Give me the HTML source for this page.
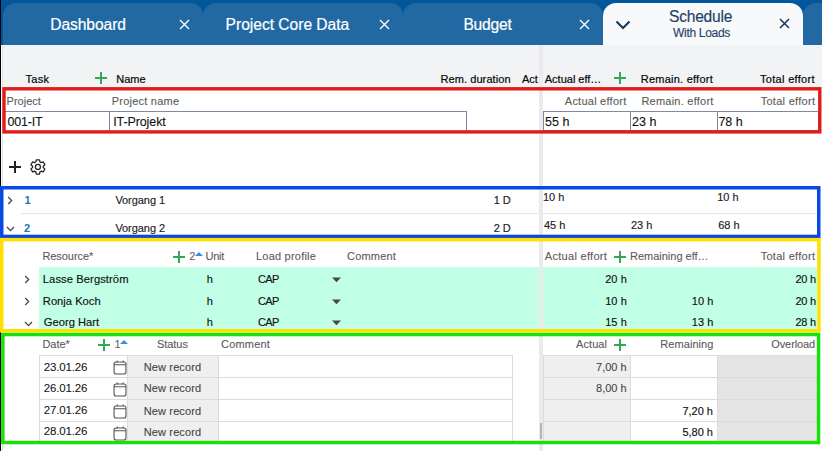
<!DOCTYPE html>
<html><head><meta charset="utf-8"><style>
html,body{margin:0;padding:0;width:822px;height:451px;overflow:hidden;background:#fff}
body{position:relative;font-family:"Liberation Sans",sans-serif}
body div,body span,body svg{position:absolute;display:block}
span{white-space:nowrap}

</style></head><body>
<div style="left:0px;top:0px;width:822px;height:45px;background:#02569a"></div>
<div style="left:3px;top:3px;width:200px;height:42px;background:#2269a4;border-radius:13px 13px 0 0"></div>
<div style="left:203px;top:3px;width:200px;height:42px;background:#2269a4;border-radius:13px 13px 0 0"></div>
<div style="left:403px;top:3px;width:200px;height:42px;background:#2269a4;border-radius:13px 13px 0 0"></div>
<div style="left:603px;top:3px;width:200px;height:42px;background:#f8f9fb;border-radius:13px 13px 0 0"></div>
<div style="left:803px;top:3px;width:200px;height:42px;background:#2269a4;border-radius:13px 13px 0 0"></div>
<span style="left:50.20px;top:17.09px;font-size:15.6px;line-height:15.6px;color:#ffffff;font-weight:normal;-webkit-text-stroke:0.2px #ffffff;letter-spacing:-0.062px;">Dashboard</span>
<span style="left:225.60px;top:17.09px;font-size:15.6px;line-height:15.6px;color:#ffffff;font-weight:normal;-webkit-text-stroke:0.2px #ffffff;letter-spacing:-0.019px;">Project Core Data</span>
<span style="left:463.40px;top:17.09px;font-size:15.6px;line-height:15.6px;color:#ffffff;font-weight:normal;-webkit-text-stroke:0.2px #ffffff;letter-spacing:-0.220px;">Budget</span>
<svg style="left:178.5px;top:19.0px" width="11" height="11" viewBox="0 0 11 11"><path d="M1 1L10 10M10 1L1 10" stroke="#ffffff" stroke-width="1.4" fill="none"/></svg>
<svg style="left:378.5px;top:19.0px" width="11" height="11" viewBox="0 0 11 11"><path d="M1 1L10 10M10 1L1 10" stroke="#ffffff" stroke-width="1.4" fill="none"/></svg>
<svg style="left:578.5px;top:19.0px" width="11" height="11" viewBox="0 0 11 11"><path d="M1 1L10 10M10 1L1 10" stroke="#ffffff" stroke-width="1.4" fill="none"/></svg>
<svg style="left:778.5px;top:18.4px" width="11" height="11" viewBox="0 0 11 11"><path d="M1 1L10 10M10 1L1 10" stroke="#173a5e" stroke-width="1.6" fill="none"/></svg>
<svg style="left:615px;top:20px" width="16" height="10" viewBox="0 0 16 10"><path d="M1.5 1.5L8 8L14.5 1.5" stroke="#1b3b5a" stroke-width="2.2" fill="none"/></svg>
<span style="left:669.00px;top:8.59px;font-size:15.6px;line-height:15.6px;color:#1d4266;font-weight:normal;-webkit-text-stroke:0.15px #1d4266;letter-spacing:-0.243px;">Schedule</span>
<span style="left:673.00px;top:27.14px;font-size:12px;line-height:12px;color:#1d4266;font-weight:normal;-webkit-text-stroke:0.12px #1d4266;letter-spacing:-0.300px;">With Loads</span>
<div style="left:0px;top:45px;width:822px;height:406px;background:#ffffff"></div>
<div style="left:0px;top:45px;width:822px;height:43px;background:#f2f3f5"></div>
<div style="left:0px;top:0px;width:1px;height:451px;background:#000"></div>
<div style="left:1px;top:45px;width:1px;height:406px;background:#ffffff"></div>
<div style="left:2px;top:45px;width:1px;height:406px;background:#dde1e6"></div>
<span style="left:25.40px;top:74.39px;font-size:11px;line-height:11px;color:#080808;font-weight:normal;-webkit-text-stroke:0.2px #080808;letter-spacing:0.367px;">Task</span>
<div style="left:95.4px;top:76.8px;width:12px;height:2px;background:#34a853"></div>
<div style="left:100.4px;top:71.8px;width:2px;height:12px;background:#34a853"></div>
<span style="left:116.20px;top:74.39px;font-size:11px;line-height:11px;color:#080808;font-weight:normal;-webkit-text-stroke:0.2px #080808;">Name</span>
<span style="right:311.31px;top:74.39px;font-size:11px;line-height:11px;color:#080808;font-weight:normal;-webkit-text-stroke:0.2px #080808;letter-spacing:0.092px;">Rem. duration</span>
<div style="left:522px;top:70px;width:17px;height:16px;overflow:hidden"><span style="left:0;top:4.39px;font-size:11px;line-height:11px;color:#080808;-webkit-text-stroke:0.2px #080808">Act</span></div>
<span style="left:544.80px;top:74.39px;font-size:11px;line-height:11px;color:#080808;font-weight:normal;-webkit-text-stroke:0.2px #080808;letter-spacing:-0.010px;">Actual eff…</span>
<div style="left:613.5px;top:77.0px;width:12px;height:2px;background:#34a853"></div>
<div style="left:618.5px;top:72.0px;width:2px;height:12px;background:#34a853"></div>
<span style="left:640.80px;top:74.39px;font-size:11px;line-height:11px;color:#080808;font-weight:normal;-webkit-text-stroke:0.2px #080808;letter-spacing:0.231px;">Remain. effort</span>
<span style="right:7.08px;top:74.39px;font-size:11px;line-height:11px;color:#080808;font-weight:normal;-webkit-text-stroke:0.2px #080808;letter-spacing:0.318px;">Total effort</span>
<span style="left:6.60px;top:95.69px;font-size:11px;line-height:11px;color:#5a5a5a;font-weight:normal;-webkit-text-stroke:0.1px #5a5a5a;">Project</span>
<span style="left:111.80px;top:95.69px;font-size:11px;line-height:11px;color:#5a5a5a;font-weight:normal;-webkit-text-stroke:0.1px #5a5a5a;letter-spacing:0.218px;">Project name</span>
<span style="right:195.56px;top:95.69px;font-size:11px;line-height:11px;color:#5a5a5a;font-weight:normal;-webkit-text-stroke:0.1px #5a5a5a;letter-spacing:0.242px;">Actual effort</span>
<span style="left:641.40px;top:95.69px;font-size:11px;line-height:11px;color:#5a5a5a;font-weight:normal;-webkit-text-stroke:0.1px #5a5a5a;letter-spacing:0.238px;">Remain. effort</span>
<span style="right:6.71px;top:95.69px;font-size:11px;line-height:11px;color:#5a5a5a;font-weight:normal;-webkit-text-stroke:0.1px #5a5a5a;letter-spacing:0.291px;">Total effort</span>
<div style="left:3px;top:111px;width:464px;height:20px;border-top:1px solid #7c8ba1;border-right:1px solid #7c8ba1;box-sizing:border-box"></div>
<div style="left:109px;top:111px;width:1px;height:20px;background:#7c8ba1"></div>
<div style="left:543px;top:111px;width:276px;height:20px;border:1px solid #7c8ba1;box-sizing:border-box"></div>
<div style="left:630px;top:111px;width:1px;height:20px;background:#7c8ba1"></div>
<div style="left:717px;top:111px;width:1px;height:20px;background:#7c8ba1"></div>
<span style="left:7.60px;top:116.32px;font-size:12.5px;line-height:12.5px;color:#111;font-weight:normal;-webkit-text-stroke:0.1px #111;letter-spacing:-0.200px;">001-IT</span>
<span style="left:113.20px;top:116.32px;font-size:12.5px;line-height:12.5px;color:#111;font-weight:normal;-webkit-text-stroke:0.1px #111;letter-spacing:-0.100px;">IT-Projekt</span>
<span style="left:545.00px;top:116.32px;font-size:12.5px;line-height:12.5px;color:#111;font-weight:normal;-webkit-text-stroke:0.1px #111;">55 h</span>
<span style="left:632.00px;top:116.32px;font-size:12.5px;line-height:12.5px;color:#111;font-weight:normal;-webkit-text-stroke:0.1px #111;">23 h</span>
<span style="left:718.40px;top:116.32px;font-size:12.5px;line-height:12.5px;color:#111;font-weight:normal;-webkit-text-stroke:0.1px #111;">78 h</span>
<div style="left:9px;top:166px;width:12px;height:2px;background:#222"></div>
<div style="left:14px;top:161px;width:2px;height:12px;background:#222"></div>
<svg style="left:28.7px;top:158.1px" width="17.8" height="17.8" viewBox="0 0 24 24"><path fill="none" stroke="#222" stroke-width="1.7" stroke-linejoin="round" d="M19.14 12.94c.04-.3.06-.61.06-.94 0-.32-.02-.64-.07-.94l2.03-1.580c.18-.14.23-.41.12-.61l-1.92-3.32c-.12-.22-.37-.29-.59-.22l-2.39.96c-.5-.38-1.03-.7-1.62-.94L14.4 2.81c-.04-.24-.24-.41-.48-.41h-3.84c-.24 0-.43.17-.47.41L9.25 5.35c-.59.24-1.13.57-1.62.94L5.24 5.33c-.22-.08-.47 0-.59.22L2.74 8.87c-.12.21-.08.47.12.61l2.03 1.58c-.05.3-.09.63-.09.94s.02.64.07.94l-2.03 1.58c-.18.14-.23.41-.12.61l1.92 3.32c.12.22.37.29.59.22l2.39-.96c.5.38 1.03.7 1.62.94l.36 2.54c.05.24.24.41.48.41h3.840c.24 0 .44-.17.47-.41l.36-2.54c.59-.24 1.13-.56 1.62-.94l2.39.96c.22.08.47 0 .59-.22l1.92-3.32c.12-.22.07-.47-.12-.61l-2.01-1.58z"/><circle cx="12" cy="12" r="3.4" fill="none" stroke="#222" stroke-width="1.7"/></svg>
<svg style="left:6.6px;top:195.8px" width="7" height="9" viewBox="0 0 7 9"><path d="M1.2 1L4.7 4.5L1.2 8" stroke="#444" stroke-width="1.2" fill="none"/></svg>
<svg style="left:6px;top:225.5px" width="9" height="6" viewBox="0 0 9 6"><path d="M1 1L4.5 4.6L8 1" stroke="#444" stroke-width="1.3" fill="none"/></svg>
<div style="left:21px;top:213px;width:796px;height:1px;background:#e6e6e6"></div>
<span style="left:24.60px;top:194.59px;font-size:11px;line-height:11px;color:#1a78b0;font-weight:bold;">1</span>
<span style="left:24.00px;top:222.59px;font-size:11px;line-height:11px;color:#1a78b0;font-weight:bold;">2</span>
<span style="left:115.40px;top:194.59px;font-size:11px;line-height:11px;color:#222;font-weight:normal;-webkit-text-stroke:0.15px #222;letter-spacing:-0.062px;">Vorgang 1</span>
<span style="left:115.40px;top:222.59px;font-size:11px;line-height:11px;color:#222;font-weight:normal;-webkit-text-stroke:0.15px #222;letter-spacing:-0.062px;">Vorgang 2</span>
<span style="right:311.20px;top:194.59px;font-size:11px;line-height:11px;color:#222;font-weight:normal;-webkit-text-stroke:0.15px #222;">1 D</span>
<span style="right:311.20px;top:222.59px;font-size:11px;line-height:11px;color:#222;font-weight:normal;-webkit-text-stroke:0.15px #222;">2 D</span>
<span style="left:543.00px;top:192.39px;font-size:11px;line-height:11px;color:#222;font-weight:normal;-webkit-text-stroke:0.15px #222;">10 h</span>
<span style="left:717.20px;top:192.39px;font-size:11px;line-height:11px;color:#222;font-weight:normal;-webkit-text-stroke:0.15px #222;">10 h</span>
<span style="left:544.00px;top:220.19px;font-size:11px;line-height:11px;color:#222;font-weight:normal;-webkit-text-stroke:0.15px #222;">45 h</span>
<span style="left:631.00px;top:220.19px;font-size:11px;line-height:11px;color:#222;font-weight:normal;-webkit-text-stroke:0.15px #222;">23 h</span>
<span style="left:718.20px;top:220.19px;font-size:11px;line-height:11px;color:#222;font-weight:normal;-webkit-text-stroke:0.15px #222;">68 h</span>
<span style="left:42.40px;top:251.29px;font-size:11px;line-height:11px;color:#5a5a5a;font-weight:normal;-webkit-text-stroke:0.1px #5a5a5a;letter-spacing:-0.062px;">Resource*</span>
<div style="left:173.0px;top:255.5px;width:12px;height:2px;background:#34a853"></div>
<div style="left:178.0px;top:250.5px;width:2px;height:12px;background:#34a853"></div>
<span style="left:189.20px;top:251.29px;font-size:11px;line-height:11px;color:#666;font-weight:normal;-webkit-text-stroke:0.1px #666;">2</span>
<svg style="left:195px;top:251.5px" width="8" height="4" viewBox="0 0 8 4"><path d="M0 4L4 0L8 4z" fill="#3b8fd6"/></svg>
<span style="left:205.40px;top:251.29px;font-size:11px;line-height:11px;color:#5a5a5a;font-weight:normal;-webkit-text-stroke:0.1px #5a5a5a;letter-spacing:-0.200px;">Unit</span>
<span style="left:256.00px;top:251.29px;font-size:11px;line-height:11px;color:#5a5a5a;font-weight:normal;-webkit-text-stroke:0.1px #5a5a5a;letter-spacing:0.218px;">Load profile</span>
<span style="left:347.00px;top:251.29px;font-size:11px;line-height:11px;color:#5a5a5a;font-weight:normal;-webkit-text-stroke:0.1px #5a5a5a;letter-spacing:0.200px;">Comment</span>
<span style="left:544.80px;top:251.29px;font-size:11px;line-height:11px;color:#5a5a5a;font-weight:normal;-webkit-text-stroke:0.1px #5a5a5a;letter-spacing:0.292px;">Actual effort</span>
<div style="left:614.3px;top:255.5px;width:12px;height:2px;background:#34a853"></div>
<div style="left:619.3px;top:250.5px;width:2px;height:12px;background:#34a853"></div>
<span style="left:630.00px;top:251.29px;font-size:11px;line-height:11px;color:#5a5a5a;font-weight:normal;-webkit-text-stroke:0.1px #5a5a5a;letter-spacing:-0.008px;">Remaining eff…</span>
<span style="right:6.71px;top:251.29px;font-size:11px;line-height:11px;color:#5a5a5a;font-weight:normal;-webkit-text-stroke:0.1px #5a5a5a;letter-spacing:0.291px;">Total effort</span>
<div style="left:39px;top:267px;width:778px;height:65px;background:#c1ffe6"></div>
<svg style="left:24.0px;top:275.0px" width="7" height="9" viewBox="0 0 7 9"><path d="M1.2 1L4.7 4.5L1.2 8" stroke="#444" stroke-width="1.2" fill="none"/></svg>
<span style="left:42.80px;top:273.72px;font-size:11.2px;line-height:11.2px;color:#111;font-weight:normal;-webkit-text-stroke:0.15px #111;letter-spacing:0.079px;">Lasse Bergström</span>
<span style="left:206.80px;top:273.89px;font-size:11px;line-height:11px;color:#111;font-weight:normal;-webkit-text-stroke:0.15px #111;">h</span>
<span style="left:258.00px;top:273.89px;font-size:11px;line-height:11px;color:#111;font-weight:normal;-webkit-text-stroke:0.15px #111;letter-spacing:-0.600px;">CAP</span>
<svg style="left:332px;top:277.0px" width="9" height="6" viewBox="0 0 9 6"><path d="M0 0.5H9L4.5 5.3z" fill="#474750"/></svg>
<span style="right:195.13px;top:273.89px;font-size:11px;line-height:11px;color:#111;font-weight:normal;-webkit-text-stroke:0.15px #111;letter-spacing:0.067px;">20 h</span>
<span style="right:6.27px;top:273.89px;font-size:11px;line-height:11px;color:#111;font-weight:normal;-webkit-text-stroke:0.15px #111;letter-spacing:-0.267px;">20 h</span>
<svg style="left:24.0px;top:296.5px" width="7" height="9" viewBox="0 0 7 9"><path d="M1.2 1L4.7 4.5L1.2 8" stroke="#444" stroke-width="1.2" fill="none"/></svg>
<span style="left:42.80px;top:296.22px;font-size:11.2px;line-height:11.2px;color:#111;font-weight:normal;-webkit-text-stroke:0.15px #111;">Ronja Koch</span>
<span style="left:206.80px;top:296.39px;font-size:11px;line-height:11px;color:#111;font-weight:normal;-webkit-text-stroke:0.15px #111;">h</span>
<span style="left:258.00px;top:296.39px;font-size:11px;line-height:11px;color:#111;font-weight:normal;-webkit-text-stroke:0.15px #111;letter-spacing:-0.600px;">CAP</span>
<svg style="left:332px;top:298.8px" width="9" height="6" viewBox="0 0 9 6"><path d="M0 0.5H9L4.5 5.3z" fill="#474750"/></svg>
<span style="right:195.13px;top:296.39px;font-size:11px;line-height:11px;color:#111;font-weight:normal;-webkit-text-stroke:0.15px #111;letter-spacing:0.067px;">10 h</span>
<span style="right:108.53px;top:296.39px;font-size:11px;line-height:11px;color:#111;font-weight:normal;-webkit-text-stroke:0.15px #111;letter-spacing:0.067px;">10 h</span>
<span style="right:6.27px;top:296.39px;font-size:11px;line-height:11px;color:#111;font-weight:normal;-webkit-text-stroke:0.15px #111;letter-spacing:-0.267px;">20 h</span>
<svg style="left:24px;top:321.1px" width="9" height="6" viewBox="0 0 9 6"><path d="M1 1L4.5 4.6L8 1" stroke="#444" stroke-width="1.3" fill="none"/></svg>
<span style="left:43.80px;top:317.02px;font-size:11.2px;line-height:11.2px;color:#111;font-weight:normal;-webkit-text-stroke:0.15px #111;">Georg Hart</span>
<span style="left:206.80px;top:317.19px;font-size:11px;line-height:11px;color:#111;font-weight:normal;-webkit-text-stroke:0.15px #111;">h</span>
<span style="left:258.00px;top:317.19px;font-size:11px;line-height:11px;color:#111;font-weight:normal;-webkit-text-stroke:0.15px #111;letter-spacing:-0.600px;">CAP</span>
<svg style="left:332px;top:319.8px" width="9" height="6" viewBox="0 0 9 6"><path d="M0 0.5H9L4.5 5.3z" fill="#474750"/></svg>
<span style="right:195.13px;top:317.19px;font-size:11px;line-height:11px;color:#111;font-weight:normal;-webkit-text-stroke:0.15px #111;letter-spacing:0.067px;">15 h</span>
<span style="right:108.53px;top:317.19px;font-size:11px;line-height:11px;color:#111;font-weight:normal;-webkit-text-stroke:0.15px #111;letter-spacing:0.067px;">13 h</span>
<span style="right:6.27px;top:317.19px;font-size:11px;line-height:11px;color:#111;font-weight:normal;-webkit-text-stroke:0.15px #111;letter-spacing:-0.267px;">28 h</span>
<span style="left:42.40px;top:339.09px;font-size:11px;line-height:11px;color:#5a5a5a;font-weight:normal;-webkit-text-stroke:0.1px #5a5a5a;letter-spacing:-0.025px;">Date*</span>
<div style="left:98.0px;top:343.5px;width:12px;height:2px;background:#34a853"></div>
<div style="left:103.0px;top:338.5px;width:2px;height:12px;background:#34a853"></div>
<span style="left:114.40px;top:339.09px;font-size:11px;line-height:11px;color:#666;font-weight:normal;-webkit-text-stroke:0.1px #666;">1</span>
<svg style="left:120px;top:340px" width="8" height="4" viewBox="0 0 8 4"><path d="M0 4L4 0L8 4z" fill="#3b8fd6"/></svg>
<span style="left:157.00px;top:339.09px;font-size:11px;line-height:11px;color:#5a5a5a;font-weight:normal;-webkit-text-stroke:0.1px #5a5a5a;letter-spacing:-0.060px;">Status</span>
<span style="left:221.00px;top:339.09px;font-size:11px;line-height:11px;color:#5a5a5a;font-weight:normal;-webkit-text-stroke:0.1px #5a5a5a;letter-spacing:0.200px;">Comment</span>
<span style="right:214.92px;top:339.09px;font-size:11px;line-height:11px;color:#5a5a5a;font-weight:normal;-webkit-text-stroke:0.1px #5a5a5a;letter-spacing:0.080px;">Actual</span>
<div style="left:614.3px;top:343.5px;width:12px;height:2px;background:#34a853"></div>
<div style="left:619.3px;top:338.5px;width:2px;height:12px;background:#34a853"></div>
<span style="right:108.54px;top:339.09px;font-size:11px;line-height:11px;color:#5a5a5a;font-weight:normal;-webkit-text-stroke:0.1px #5a5a5a;letter-spacing:0.062px;">Remaining</span>
<span style="right:6.90px;top:339.09px;font-size:11px;line-height:11px;color:#5a5a5a;font-weight:normal;-webkit-text-stroke:0.1px #5a5a5a;letter-spacing:-0.100px;">Overload</span>
<div style="left:39px;top:355px;width:474px;height:87px;background:#fff"></div>
<div style="left:127px;top:355px;width:91px;height:87px;background:#efefef"></div>
<div style="left:543px;top:355px;width:87px;height:87px;background:#efefef"></div>
<div style="left:717px;top:355px;width:100px;height:87px;background:#e4e4e4"></div>
<div style="left:39px;top:355px;width:474px;height:1px;background:#dcdcdc"></div>
<div style="left:543px;top:355px;width:274px;height:1px;background:#dcdcdc"></div>
<div style="left:39px;top:377px;width:474px;height:1px;background:#dcdcdc"></div>
<div style="left:543px;top:377px;width:274px;height:1px;background:#dcdcdc"></div>
<div style="left:39px;top:399px;width:474px;height:1px;background:#dcdcdc"></div>
<div style="left:543px;top:399px;width:274px;height:1px;background:#dcdcdc"></div>
<div style="left:39px;top:421px;width:474px;height:1px;background:#dcdcdc"></div>
<div style="left:543px;top:421px;width:274px;height:1px;background:#dcdcdc"></div>
<div style="left:39px;top:355px;width:1px;height:87px;background:#dcdcdc"></div>
<div style="left:127px;top:355px;width:1px;height:87px;background:#dcdcdc"></div>
<div style="left:218px;top:355px;width:1px;height:87px;background:#dcdcdc"></div>
<div style="left:512px;top:355px;width:1px;height:87px;background:#dcdcdc"></div>
<div style="left:543px;top:355px;width:1px;height:87px;background:#dcdcdc"></div>
<div style="left:630px;top:355px;width:1px;height:87px;background:#dcdcdc"></div>
<div style="left:717px;top:355px;width:1px;height:87px;background:#dcdcdc"></div>
<span style="left:43.80px;top:361.67px;font-size:11.5px;line-height:11.5px;color:#111;font-weight:normal;-webkit-text-stroke:0.05px #111;letter-spacing:-0.171px;">23.01.26</span>
<svg style="left:112.5px;top:359.5px" width="14" height="15" viewBox="0 0 14 15"><rect x="1.05" y="2.05" width="11.9" height="11.9" rx="2" fill="none" stroke="#555" stroke-width="1.1"/><path d="M1 4.8H13M4.2 0.4V2.2M10.2 0.4V2.2" stroke="#555" stroke-width="1.1" fill="none"/></svg>
<span style="left:143.80px;top:362.09px;font-size:11px;line-height:11px;color:#444;font-weight:normal;-webkit-text-stroke:0.1px #444;letter-spacing:0.122px;">New record</span>
<span style="right:195.40px;top:362.09px;font-size:11px;line-height:11px;color:#444;font-weight:normal;-webkit-text-stroke:0.1px #444;">7,00 h</span>
<span style="left:43.80px;top:382.97px;font-size:11.5px;line-height:11.5px;color:#111;font-weight:normal;-webkit-text-stroke:0.05px #111;letter-spacing:-0.171px;">26.01.26</span>
<svg style="left:112.5px;top:381.5px" width="14" height="15" viewBox="0 0 14 15"><rect x="1.05" y="2.05" width="11.9" height="11.9" rx="2" fill="none" stroke="#555" stroke-width="1.1"/><path d="M1 4.8H13M4.2 0.4V2.2M10.2 0.4V2.2" stroke="#555" stroke-width="1.1" fill="none"/></svg>
<span style="left:143.80px;top:383.39px;font-size:11px;line-height:11px;color:#444;font-weight:normal;-webkit-text-stroke:0.1px #444;letter-spacing:0.122px;">New record</span>
<span style="right:195.40px;top:383.39px;font-size:11px;line-height:11px;color:#444;font-weight:normal;-webkit-text-stroke:0.1px #444;">8,00 h</span>
<span style="left:43.80px;top:405.27px;font-size:11.5px;line-height:11.5px;color:#111;font-weight:normal;-webkit-text-stroke:0.05px #111;letter-spacing:-0.171px;">27.01.26</span>
<svg style="left:112.5px;top:403.5px" width="14" height="15" viewBox="0 0 14 15"><rect x="1.05" y="2.05" width="11.9" height="11.9" rx="2" fill="none" stroke="#555" stroke-width="1.1"/><path d="M1 4.8H13M4.2 0.4V2.2M10.2 0.4V2.2" stroke="#555" stroke-width="1.1" fill="none"/></svg>
<span style="left:143.80px;top:405.69px;font-size:11px;line-height:11px;color:#444;font-weight:normal;-webkit-text-stroke:0.1px #444;letter-spacing:0.122px;">New record</span>
<span style="right:109.00px;top:405.69px;font-size:11px;line-height:11px;color:#111;font-weight:normal;-webkit-text-stroke:0.15px #111;">7,20 h</span>
<span style="left:43.80px;top:426.47px;font-size:11.5px;line-height:11.5px;color:#111;font-weight:normal;-webkit-text-stroke:0.05px #111;letter-spacing:-0.171px;">28.01.26</span>
<svg style="left:112.5px;top:425.5px" width="14" height="15" viewBox="0 0 14 15"><rect x="1.05" y="2.05" width="11.9" height="11.9" rx="2" fill="none" stroke="#555" stroke-width="1.1"/><path d="M1 4.8H13M4.2 0.4V2.2M10.2 0.4V2.2" stroke="#555" stroke-width="1.1" fill="none"/></svg>
<span style="left:143.80px;top:426.89px;font-size:11px;line-height:11px;color:#444;font-weight:normal;-webkit-text-stroke:0.1px #444;letter-spacing:0.122px;">New record</span>
<span style="right:109.00px;top:426.89px;font-size:11px;line-height:11px;color:#111;font-weight:normal;-webkit-text-stroke:0.15px #111;">5,80 h</span>
<div style="left:539px;top:45px;width:4px;height:406px;background:#ebebeb"></div>
<div style="left:540px;top:423px;width:2px;height:16px;background:#b4b4b4"></div>
<svg style="left:0;top:0" width="822" height="451"><rect x="4.00" y="88.80" width="815.80" height="43.10" fill="none" stroke="#e31a1a" stroke-width="3.4"/></svg>
<svg style="left:0;top:0" width="822" height="451"><rect x="1.75" y="187.75" width="817.00" height="48.70" fill="none" stroke="#0a48e2" stroke-width="3.5"/></svg>
<svg style="left:0;top:0" width="822" height="451"><rect x="1.75" y="239.65" width="817.20" height="91.10" fill="none" stroke="#ffe000" stroke-width="3.5"/></svg>
<svg style="left:0;top:0" width="822" height="451"><rect x="2.85" y="334.55" width="815.70" height="108.00" fill="none" stroke="#19e00a" stroke-width="3.5"/></svg>
</body></html>
